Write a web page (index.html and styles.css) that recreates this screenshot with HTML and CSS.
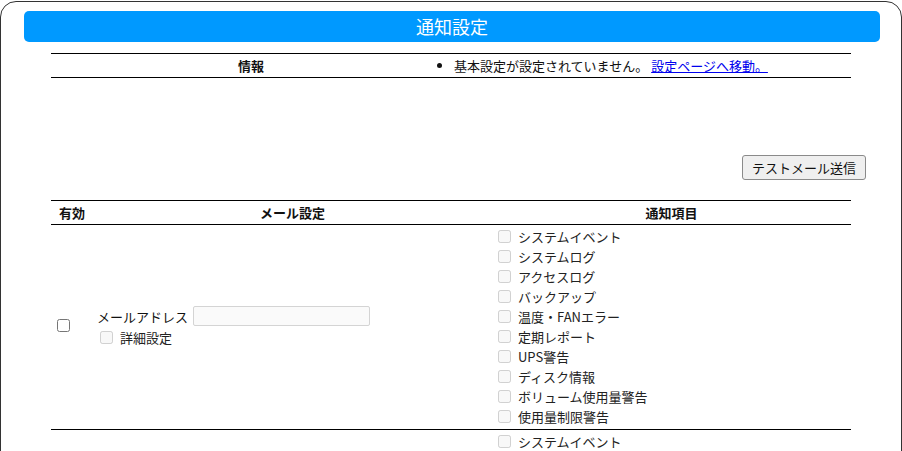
FILE: index.html
```html
<!DOCTYPE html>
<html lang="ja">
<head>
<meta charset="utf-8">
<title>通知設定</title>
<link rel="stylesheet" href="styles.css">
</head>
<body>
<div class="wrap">
  <div class="title-bar">通知設定</div>

  <table class="info">
    <tr>
      <th class="info-head">情報</th>
      <td class="info-body">
        <ul class="msgs">
          <li>基本設定が設定されていません。 <a href="#">設定ページへ移動。</a></li>
        </ul>
      </td>
    </tr>
  </table>

  <div class="actions">
    <button class="btn" type="button">テストメール送信</button>
  </div>

  <table class="mail">
    <colgroup>
      <col class="c1">
      <col class="c2">
      <col class="c3">
    </colgroup>
    <thead>
      <tr>
        <th>有効</th>
        <th>メール設定</th>
        <th>通知項目</th>
      </tr>
    </thead>
    <tbody>
      <tr>
        <td class="en"><input type="checkbox" class="cb"></td>
        <td class="cfg">
          <div class="addr"><span>メールアドレス</span><input type="text" class="field" disabled></div>
          <label class="det"><input type="checkbox" class="cb" disabled>詳細設定</label>
        </td>
        <td class="items">
          <label class="item"><input type="checkbox" class="cb" disabled>システムイベント</label>
          <label class="item"><input type="checkbox" class="cb" disabled>システムログ</label>
          <label class="item"><input type="checkbox" class="cb" disabled>アクセスログ</label>
          <label class="item"><input type="checkbox" class="cb" disabled>バックアップ</label>
          <label class="item"><input type="checkbox" class="cb" disabled>温度・FANエラー</label>
          <label class="item"><input type="checkbox" class="cb" disabled>定期レポート</label>
          <label class="item"><input type="checkbox" class="cb" disabled>UPS警告</label>
          <label class="item"><input type="checkbox" class="cb" disabled>ディスク情報</label>
          <label class="item"><input type="checkbox" class="cb" disabled>ボリューム使用量警告</label>
          <label class="item"><input type="checkbox" class="cb" disabled>使用量制限警告</label>
        </td>
      </tr>
      <tr>
        <td class="en"><input type="checkbox" class="cb"></td>
        <td class="cfg">
          <div class="addr"><span>メールアドレス</span><input type="text" class="field" disabled></div>
          <label class="det"><input type="checkbox" class="cb" disabled>詳細設定</label>
        </td>
        <td class="items">
          <label class="item"><input type="checkbox" class="cb" disabled>システムイベント</label>
          <label class="item"><input type="checkbox" class="cb" disabled>システムログ</label>
          <label class="item"><input type="checkbox" class="cb" disabled>アクセスログ</label>
          <label class="item"><input type="checkbox" class="cb" disabled>バックアップ</label>
          <label class="item"><input type="checkbox" class="cb" disabled>温度・FANエラー</label>
          <label class="item"><input type="checkbox" class="cb" disabled>定期レポート</label>
          <label class="item"><input type="checkbox" class="cb" disabled>UPS警告</label>
          <label class="item"><input type="checkbox" class="cb" disabled>ディスク情報</label>
          <label class="item"><input type="checkbox" class="cb" disabled>ボリューム使用量警告</label>
          <label class="item"><input type="checkbox" class="cb" disabled>使用量制限警告</label>
        </td>
      </tr>
    </tbody>
  </table>
</div>
</body>
</html>
```

FILE: styles.css
```css
html, body {
  margin: 0;
  padding: 0;
  background: #fff;
}
body {
  font-family: "Noto Sans CJK JP", "Noto Sans", sans-serif;
  font-size: 13px;
  color: #111;
}
.wrap {
  margin-top: 1px;
  width: 900px;
  min-height: 900px;
  border: 1px solid #333;
  border-radius: 16px;
  padding-top: 9px;
}
.title-bar {
  margin: 0 21px 0 23px;
  height: 31px;
  line-height: 31px;
  background: #0099ff;
  color: #fff;
  border-radius: 5px;
  text-align: center;
  font-size: 18px;
}
.info {
  width: 800px;
  margin: 11px auto 0;
  border-collapse: collapse;
  border-top: 1px solid #000;
  border-bottom: 1px solid #000;
}
.info th, .info td {
  padding: 0 0 1px;
  height: 22px;
}
.info-head {
  width: 50%;
  font-weight: bold;
  text-align: center;
}
.info-body {
  text-align: left;
  padding-left: 3px !important;
}
.msgs {
  margin: 0;
  padding: 0;
}
.msgs li {
  list-style: disc outside;
}
.msgs a {
  color: #0000ee;
}
.actions {
  display: flex;
  justify-content: flex-end;
  padding-right: 35px;
  margin-top: 77px;
}
.btn {
  font-family: "Noto Sans CJK JP", sans-serif;
  font-size: 13px;
  color: #111;
  height: 25px;
  padding: 0 9px;
  background: #efefef;
  border: 1px solid #8a8a8a;
  border-radius: 3px;
}
.mail {
  width: 800px;
  margin: 20px auto 0;
  border-collapse: collapse;
  table-layout: fixed;
  border-top: 1px solid #000;
}
.c1 { width: 42px; }
.c2 { width: 399px; }
.c3 { width: 359px; }
.mail th {
  height: 23px;
  padding: 0;
  font-weight: bold;
  text-align: center;
  border-bottom: 1px solid #000;
}
.mail td {
  padding: 1px 2px 3px;
  vertical-align: middle;
  border-bottom: 1px solid #000;
}
.cb {
  width: 13px;
  height: 13px;
  margin: 0 4px 0 4px;
}
.cfg {
  text-align: left;
}
.addr {
  display: flex;
  align-items: center;
  gap: 5px;
  padding-left: 2px;
  height: 22px;
}
.field {
  width: 177px;
  height: 20px;
  box-sizing: border-box;
  border: 1px solid #d4d4d4;
  border-radius: 2px;
  background: #fafafa;
  margin: 0;
}
.det {
  display: flex;
  align-items: center;
  height: 20px;
  padding-left: 1px;
  color: #222;
}
.det .cb {
  margin-right: 7px;
}
.items .item {
  display: flex;
  align-items: center;
  height: 20px;
  color: #222;
}
.items .cb {
  margin-right: 7px;
}
```
